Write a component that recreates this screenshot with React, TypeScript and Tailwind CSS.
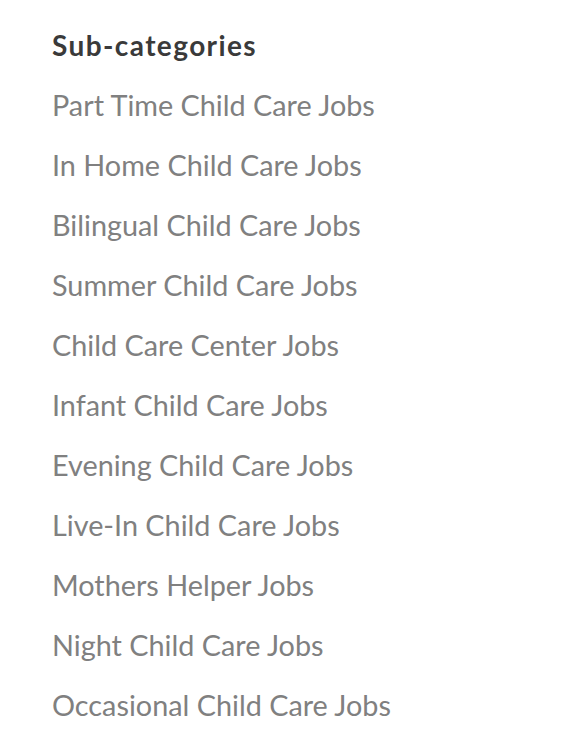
import React from 'react';

const subCategories = [
  'Part Time Child Care Jobs',
  'In Home Child Care Jobs',
  'Bilingual Child Care Jobs',
  'Summer Child Care Jobs',
  'Child Care Center Jobs',
  'Infant Child Care Jobs',
  'Evening Child Care Jobs',
  'Live-In Child Care Jobs',
  'Mothers Helper Jobs',
  'Night Child Care Jobs',
  'Occasional Child Care Jobs',
];

export default function App() {
  return (
    <div className="min-h-screen bg-white font-['Lato',sans-serif]">
      <section className="px-[52px] pt-[15px]">
        <h2 className="text-[28px] leading-[60px] font-bold tracking-[0.05em] text-[#3a3a3a]">
          Sub-categories
        </h2>
        <ul>
          {subCategories.map((item) => (
            <li key={item}>
              <a href="#" className="block text-[28.8px] leading-[60px] text-[#808080]">
                {item}
              </a>
            </li>
          ))}
        </ul>
      </section>
    </div>
  );
}
